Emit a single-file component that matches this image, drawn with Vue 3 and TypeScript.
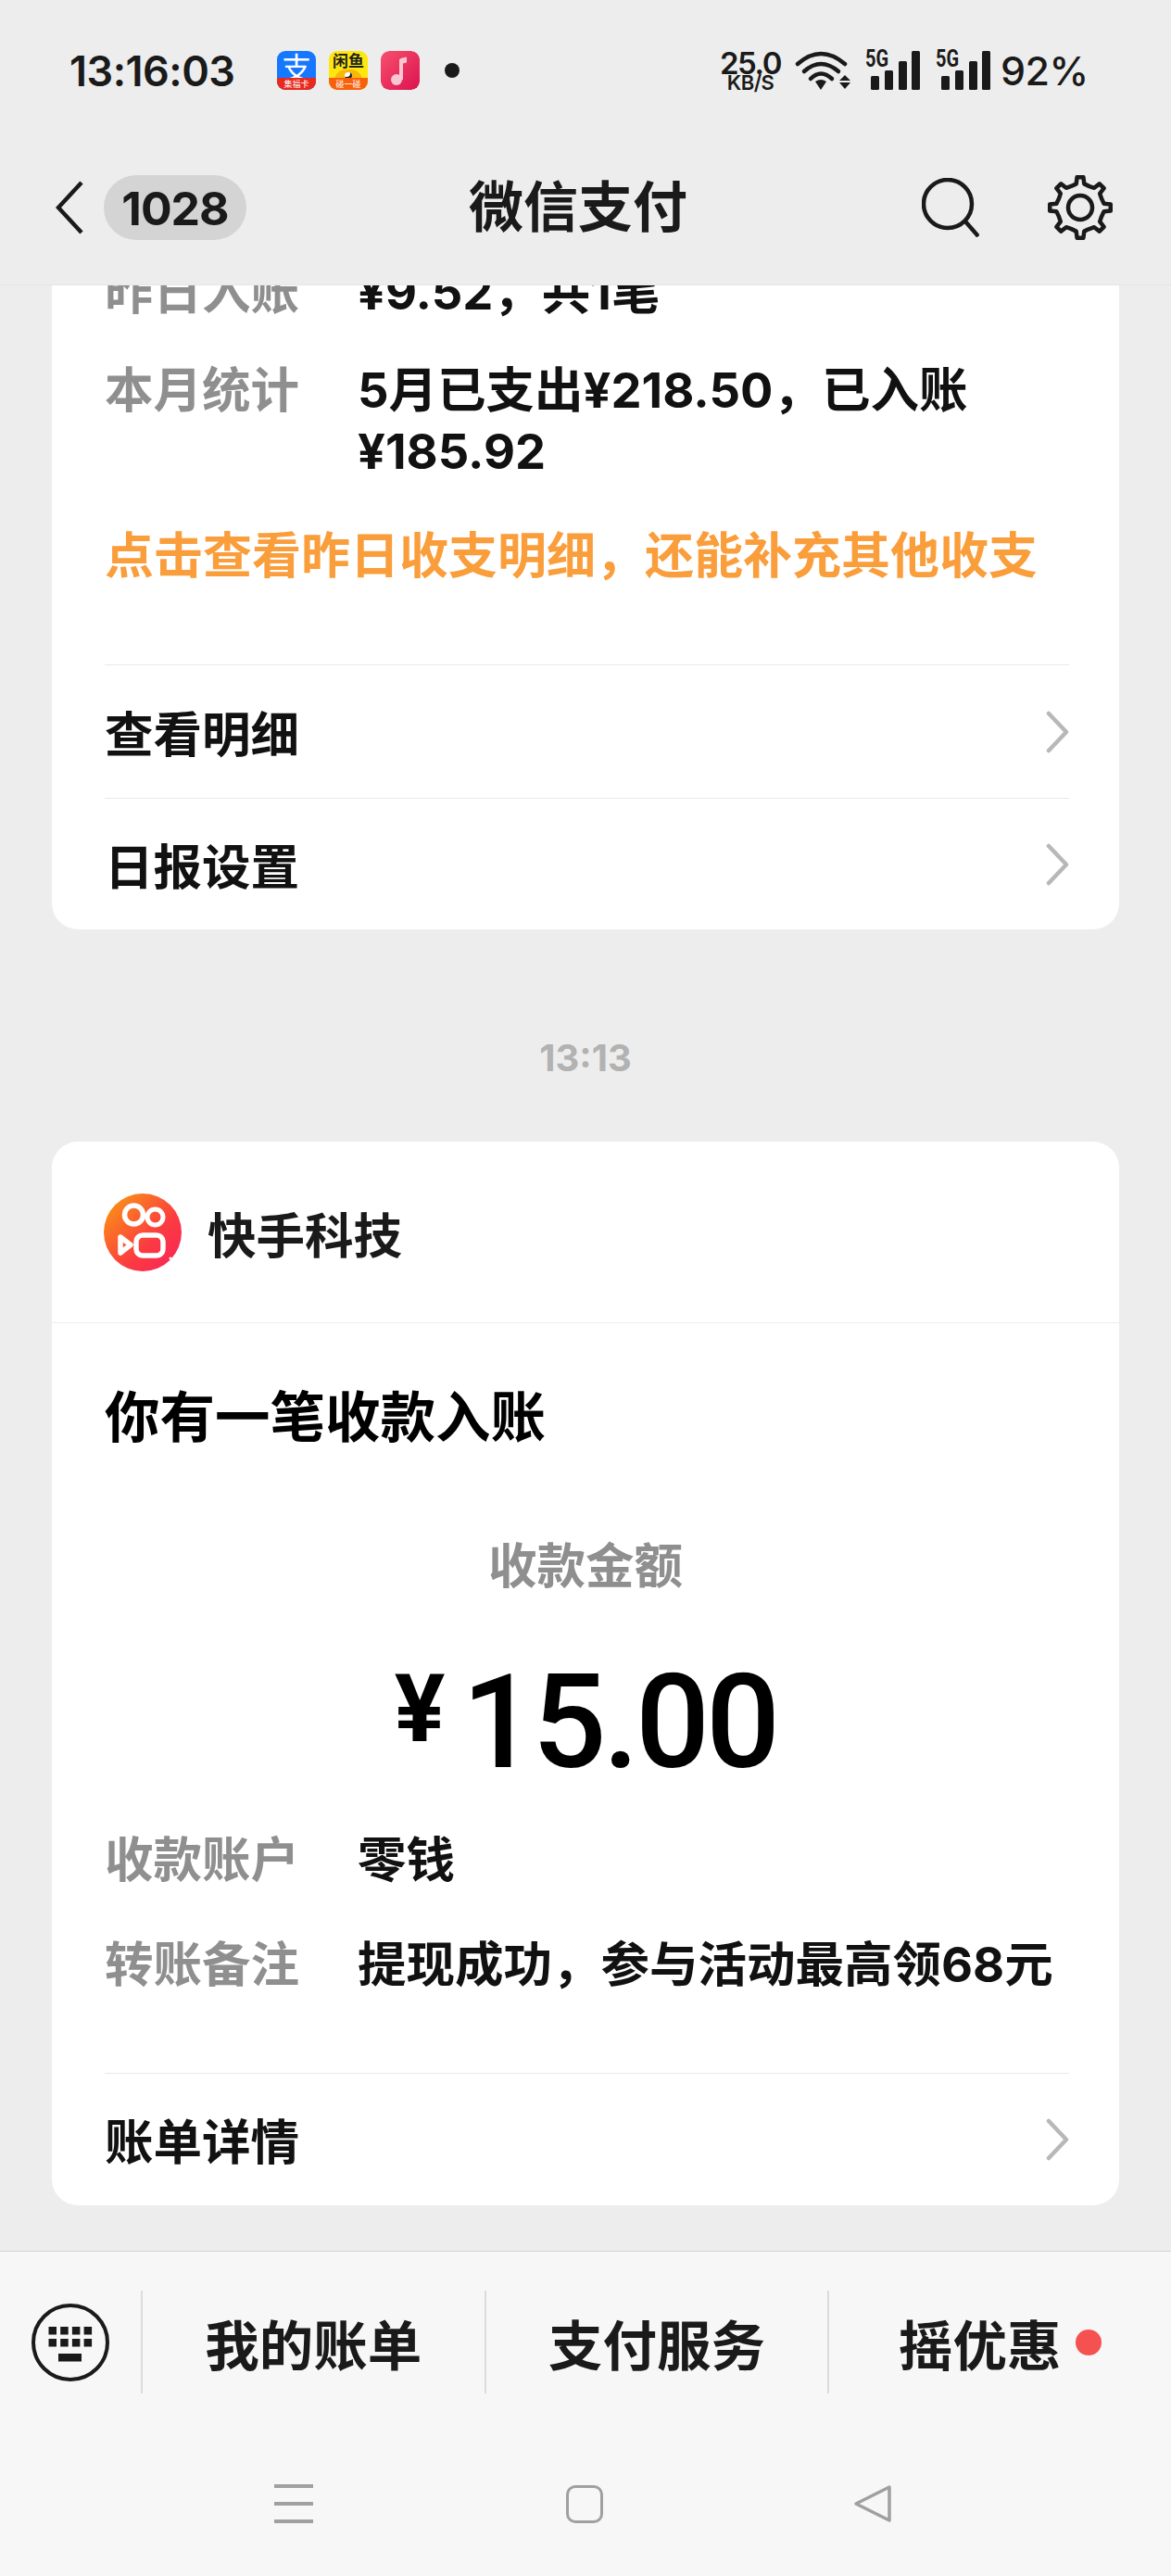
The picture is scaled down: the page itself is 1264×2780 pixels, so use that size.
<script setup lang="ts">
const signalBars = [
  { x: 6, y: 27, h: 15 },
  { x: 21, y: 21, h: 21 },
  { x: 36, y: 11, h: 31 },
  { x: 50, y: 0, h: 42 },
]

// 8-tooth gear outline, centred on 36,36
function gearPath(): string {
  const pts: string[] = []
  const teeth = 8
  for (let i = 0; i < teeth; i++) {
    const a = (i * Math.PI * 2) / teeth - Math.PI / 2
    const step = Math.PI / teeth
    const list: [number, number][] = [
      [a - step * 0.95, 25],
      [a - step * 0.42, 26],
      [a - step * 0.26, 33],
      [a + step * 0.26, 33],
      [a + step * 0.42, 26],
    ]
    for (const [ang, r] of list) {
      pts.push(`${(36 + Math.cos(ang) * r).toFixed(1)} ${(36 + Math.sin(ang) * r).toFixed(1)}`)
    }
  }
  return `M${pts.join('L')}Z`
}
const gear = gearPath()

const keyRows = [0, 1]
const keyCols = [0, 1, 2, 3]
</script>

<template>
  <div class="phone">
    <header class="top">
      <div class="status">
        <span class="clock">13:16:03</span>
        <div class="notify">
          <div class="app app-pay">
            <span class="app-big">支</span>
            <span class="app-band app-band-red">集福卡</span>
          </div>
          <div class="app app-fish">
            <span class="app-title">闲鱼</span>
            <span class="fish-face"></span>
            <span class="app-band app-band-orange">碰一碰</span>
          </div>
          <svg class="app" viewBox="0 0 42 42" width="42" height="42">
            <defs>
              <linearGradient id="musicgrad" x1="0" y1="0" x2="1" y2="1">
                <stop offset="0" stop-color="#f8506c" />
                <stop offset="1" stop-color="#db1250" />
              </linearGradient>
            </defs>
            <rect width="42" height="42" rx="9" fill="url(#musicgrad)" />
            <circle cx="17" cy="31" r="6" fill="#f9c7d2" />
            <path d="M20 31V10c0-1 1-2 3-2.500l5-1v6l-4 1V31z" fill="#f9c7d2" />
          </svg>
          <span class="dot"></span>
        </div>
        <div class="sys">
          <div class="speed">
            <span class="speed-num">25.0</span>
            <span class="speed-unit">KB/S</span>
          </div>
          <svg class="wifi" viewBox="0 0 60 42" width="60" height="42">
            <g fill="none" stroke="#1a1a1a" stroke-width="4.500" stroke-linecap="round">
              <path d="M3 14Q28 -8 54 14" />
              <path d="M10 22Q28 6 47 22" />
              <path d="M17 30Q28 19 40 30" />
            </g>
            <path d="M22 33Q28 29 34 33L28 42z" fill="#1a1a1a" />
            <path d="M48 32l6-6 6 6zM48 34h12l-6 7z" fill="#1a1a1a" />
          </svg>
          <div v-for="n in 2" :key="n" class="signal">
            <span class="five-g">5G</span>
            <svg viewBox="0 0 60 42" width="60" height="42">
              <rect v-for="b in signalBars" :key="b.x" :x="b.x" :y="b.y" :width="9" :height="b.h" rx="1.500" fill="#1a1a1a" />
            </svg>
          </div>
          <span class="battery">92%</span>
        </div>
      </div>
      <div class="navbar">
        <div class="nav-left">
          <svg class="back" viewBox="0 0 30 58" width="30" height="58">
            <path d="M28 2L3 29l25 27" fill="none" stroke="#1a1a1a" stroke-width="4.500" />
          </svg>
          <span class="pill">1028</span>
        </div>
        <div class="nav-title">微信支付</div>
        <div class="nav-right">
          <svg viewBox="0 0 62 64" width="62" height="64">
            <circle cx="28" cy="28" r="26" fill="none" stroke="#1a1a1a" stroke-width="4.500" />
            <path d="M47 47l14 16" fill="none" stroke="#1a1a1a" stroke-width="4.500" />
          </svg>
          <svg viewBox="1 1 70 70" width="70" height="70">
            <path :d="gear" fill="none" stroke="#1a1a1a" stroke-width="4.500" stroke-linejoin="round" />
            <circle cx="36" cy="36" r="13" fill="none" stroke="#1a1a1a" stroke-width="4.500" />
          </svg>
        </div>
      </div>
    </header>

    <main class="feed">
      <section class="card card-first">
        <div class="field">
          <span class="label">昨日入账</span>
          <span class="value">¥9.52，共1笔</span>
        </div>
        <div class="field field-next">
          <span class="label">本月统计</span>
          <span class="value">5月已支出¥218.50，已入账¥185.92</span>
        </div>
        <p class="hint">点击查看昨日收支明细，还能补充其他收支</p>
        <div class="link">
          <span>查看明细</span>
          <svg class="arrow" viewBox="0 0 26 46" width="26" height="46">
            <path d="M4 3l19 20L4 43" fill="none" stroke="#b8b8b8" stroke-width="4.500" stroke-linecap="round" stroke-linejoin="round" />
          </svg>
        </div>
        <div class="link link-short">
          <span>日报设置</span>
          <svg class="arrow" viewBox="0 0 26 46" width="26" height="46">
            <path d="M4 3l19 20L4 43" fill="none" stroke="#b8b8b8" stroke-width="4.500" stroke-linecap="round" stroke-linejoin="round" />
          </svg>
        </div>
      </section>

      <div class="stamp">13:13</div>

      <section class="card">
        <div class="brand">
          <svg viewBox="0 0 84 84" width="84" height="84">
            <defs>
              <linearGradient id="ksgrad" x1="0" y1="0" x2="1" y2="1">
                <stop offset="0" stop-color="#fb9f10" />
                <stop offset="0.600" stop-color="#fb3c40" />
                <stop offset="1" stop-color="#f9205c" />
              </linearGradient>
            </defs>
            <circle cx="42" cy="42" r="42" fill="url(#ksgrad)" />
            <circle cx="32.500" cy="23" r="10" fill="none" stroke="#fff" stroke-width="5.500" />
            <circle cx="55.500" cy="25.500" r="8.500" fill="none" stroke="#fff" stroke-width="5" />
            <rect x="35" y="45" width="29" height="22" rx="7" fill="none" stroke="#fff" stroke-width="5.500" />
            <path d="M18 47l11 8.500-11 8.500z" fill="none" stroke="#fff" stroke-width="5.500" stroke-linejoin="round" />
            <circle cx="72" cy="70" r="1.500" fill="#fff" />
          </svg>
          <span class="brand-name">快手科技</span>
        </div>
        <div class="body">
          <h2 class="headline">你有一笔收款入账</h2>
          <div class="amount-label">收款金额</div>
          <div class="amount"><span class="yen">¥</span>15.00</div>
          <div class="field field-first">
            <span class="label">收款账户</span>
            <span class="value">零钱</span>
          </div>
          <div class="field field-note">
            <span class="label">转账备注</span>
            <span class="value">提现成功，参与活动最高领68元</span>
          </div>
        </div>
        <div class="link link-bill">
          <span>账单详情</span>
          <svg class="arrow" viewBox="0 0 26 46" width="26" height="46">
            <path d="M4 3l19 20L4 43" fill="none" stroke="#b8b8b8" stroke-width="4.500" stroke-linecap="round" stroke-linejoin="round" />
          </svg>
        </div>
      </section>
    </main>

    <footer class="bottom">
      <div class="tabs">
        <div class="kbd">
          <svg viewBox="0 0 84 84" width="84" height="84">
            <circle cx="42" cy="42" r="40" fill="none" stroke="#1a1a1a" stroke-width="4" />
            <g v-for="r in keyRows" :key="r">
              <rect v-for="c in keyCols" :key="c" :x="18.500 + c * 12.700" :y="25 + r * 13" width="8.500" height="8.500" fill="#1a1a1a" />
            </g>
            <rect x="29" y="54" width="25" height="8.500" fill="#1a1a1a" />
          </svg>
        </div>
        <div class="tab">我的账单</div>
        <div class="tab">支付服务</div>
        <div class="tab">摇优惠<span class="red-dot"></span></div>
      </div>
      <div class="softkeys">
        <div class="menu-key"><i></i><i></i><i></i></div>
        <div class="home-key"></div>
        <svg class="back-key" viewBox="0 0 42 42" width="42" height="42">
          <path d="M39 3L3 21l36 18z" fill="none" stroke="#a0a0a0" stroke-width="3.500" stroke-linejoin="round" />
        </svg>
      </div>
    </footer>
  </div>
</template>

<style>
html,
body {
  margin: 0;
  background: #ededed;
}
</style>

<style scoped>
.phone {
  width: 1264px;
  height: 2780px;
  display: flex;
  flex-direction: column;
  overflow: hidden;
  background: #ededed;
  color: #1a1a1a;
  font-family: Inter, "Noto Sans CJK SC", sans-serif;
}
.top {
  height: 308px;
  flex: none;
  box-sizing: border-box;
  padding-top: 55px;
  border-bottom: 1px solid #e6e6e6;
}
.status {
  height: 42px;
  display: flex;
  align-items: center;
  padding-left: 75px;
}
.clock {
  width: 224px;
  font-size: 45px;
  font-weight: 600;
  letter-spacing: -0.500px;
}
.notify {
  display: flex;
  align-items: center;
  gap: 14px;
}
.app {
  position: relative;
  flex: none;
  width: 42px;
  height: 42px;
  border-radius: 9px;
  font-family: "Noto Sans CJK SC", sans-serif;
  text-align: center;
}
.app-pay {
  background: #1677ff;
}
.app-fish {
  background: #ffe60f;
}
.app-big {
  display: block;
  height: 30px;
  font-size: 32px;
  line-height: 32px;
  color: #fff;
}
.app-title {
  display: block;
  height: 20px;
  font-size: 17px;
  line-height: 20px;
  font-weight: 700;
  color: #222;
}
.fish-face {
  position: relative;
  display: block;
  width: 30px;
  height: 12px;
  margin: 0 auto;
  border-radius: 14px 14px 0 0;
  background: #f9b70d;
}
.fish-face::after {
  content: "";
  position: absolute;
  left: 11px;
  top: 3px;
  width: 8px;
  height: 7px;
  border-radius: 50%;
  background: #fff;
  box-shadow: inset -2px -2px 0 #222;
}
.app-band {
  position: absolute;
  left: 0;
  right: 0;
  bottom: 0;
  height: 13px;
  border-radius: 0 0 9px 9px;
  font-size: 9px;
  line-height: 13px;
  color: #fff;
}
.app-band-red {
  background: #e8291c;
}
.app-band-orange {
  background: #f8610c;
}
.dot {
  width: 16px;
  height: 16px;
  margin-left: 13px;
  border-radius: 50%;
  background: #1a1a1a;
}
.sys {
  display: flex;
  align-items: center;
  margin-left: 280px;
}
.speed {
  width: 68px;
  display: flex;
  flex-direction: column;
  align-items: center;
  font-weight: 600;
}
.speed-num {
  font-size: 33px;
  line-height: 26px;
  letter-spacing: -1.500px;
}
.speed-unit {
  font-size: 22px;
  line-height: 16px;
  letter-spacing: -0.500px;
}
.wifi {
  margin-left: 14px;
}
.signal {
  position: relative;
  display: flex;
  margin-left: 16px;
}
.five-g {
  position: absolute;
  left: 0;
  top: 0;
  font-family: Roboto, sans-serif;
  font-size: 25px;
  line-height: 18px;
  font-weight: 700;
  transform: scaleX(0.800);
  transform-origin: left;
}
.battery {
  margin-left: 10px;
  font-size: 43px;
  font-weight: 500;
  letter-spacing: -0.500px;
}
.navbar {
  display: grid;
  grid-template-columns: 506px 1fr auto;
  align-items: center;
  height: 72px;
  margin-top: 91px;
}
.nav-left {
  display: flex;
  align-items: center;
  padding-left: 60px;
  gap: 22px;
}
.pill {
  width: 154px;
  height: 70px;
  border-radius: 35px;
  background: #d4d4d4;
  text-align: center;
  font-size: 50px;
  font-weight: 700;
  line-height: 72px;
  letter-spacing: -1px;
}
.nav-title {
  font-size: 59px;
  font-weight: 700;
  line-height: 72px;
}
.nav-right {
  display: flex;
  align-items: center;
  gap: 74px;
  padding-right: 63px;
}
.feed {
  flex: 1;
  min-height: 0;
  overflow: hidden;
}
.card {
  margin: 0 56px;
  background: #fff;
  border-radius: 28px;
}
.card-first {
  margin-top: -60px;
  padding-top: 34px;
}
.field {
  display: flex;
  padding: 0 57px;
  font-size: 52.500px;
  line-height: 66px;
  font-weight: 700;
}
.label {
  flex: none;
  width: 273px;
  color: #8f8f8f;
}
.value {
  color: #111;
}
.field-next {
  margin-top: 40px;
}
.hint {
  margin: 47px 57px 0;
  font-size: 53px;
  line-height: 66px;
  font-weight: 700;
  color: #fa9d3b;
  white-space: nowrap;
}
.link {
  display: flex;
  align-items: center;
  justify-content: space-between;
  height: 143px;
  margin: 0 54px 0 57px;
  border-top: 1px solid #e9e9e9;
  font-size: 52.500px;
  font-weight: 700;
  color: #111;
}
.link span {
  margin-bottom: 2px;
}
.hint + .link {
  margin-top: 84px;
}
.link-short {
  height: 141px;
}
.stamp {
  margin: 111px 0 62px;
  text-align: center;
  font-size: 40px;
  font-weight: 700;
  line-height: 56px;
  color: #b2b2b2;
}
.brand {
  display: flex;
  align-items: center;
  gap: 28px;
  height: 196px;
  box-sizing: border-box;
  padding-left: 56px;
  border-bottom: 1px solid #ededed;
}
.brand-name {
  font-size: 52.500px;
  font-weight: 700;
}
.body {
  padding-top: 61px;
}
.headline {
  margin: 0 57px;
  font-size: 59.500px;
  line-height: 80px;
  font-weight: 700;
  color: #000;
}
.amount-label {
  margin-top: 88px;
  text-align: center;
  font-size: 52.500px;
  line-height: 66px;
  font-weight: 700;
  color: #8f8f8f;
}
.amount {
  display: flex;
  align-items: flex-start;
  justify-content: center;
  margin-top: 62px;
  height: 140px;
  font-family: Roboto, sans-serif;
  font-size: 141px;
  line-height: 148px;
  font-weight: 500;
  letter-spacing: -4px;
  color: #000;
}
.yen {
  font-size: 102px;
  line-height: 119px;
  font-weight: 700;
  letter-spacing: 0;
  margin-right: 18px;
}
.field-first {
  margin-top: 49px;
}
.field-note {
  margin-top: 47px;
}
.link-bill {
  margin-top: 84px;
  height: 142px;
}
.bottom {
  flex: none;
  height: 351px;
  box-sizing: border-box;
  border-top: 1px solid #d4d4d4;
  background: #f7f7f7;
}
.tabs {
  display: flex;
  height: 111px;
  margin-top: 42px;
}
.kbd {
  width: 152px;
  display: flex;
  align-items: center;
  justify-content: center;
}
.tab {
  width: 371px;
  box-sizing: border-box;
  border-left: 2px solid #dcdcdc;
  display: flex;
  align-items: center;
  justify-content: center;
  font-size: 58.500px;
  font-weight: 700;
  color: #1a1a1a;
}
.red-dot {
  width: 28px;
  height: 28px;
  margin-left: 16px;
  border-radius: 50%;
  background: #f55151;
}
.softkeys {
  display: flex;
  align-items: center;
  margin-top: 98px;
  padding-left: 296px;
}
.menu-key {
  width: 42px;
  height: 42px;
  display: flex;
  flex-direction: column;
  justify-content: space-between;
}
.menu-key i {
  height: 4px;
  background: #a0a0a0;
}
.home-key {
  width: 40px;
  height: 41px;
  box-sizing: border-box;
  margin-left: 273px;
  border: 3.500px solid #a0a0a0;
  border-radius: 10px;
}
.back-key {
  margin-left: 270px;
}
</style>
